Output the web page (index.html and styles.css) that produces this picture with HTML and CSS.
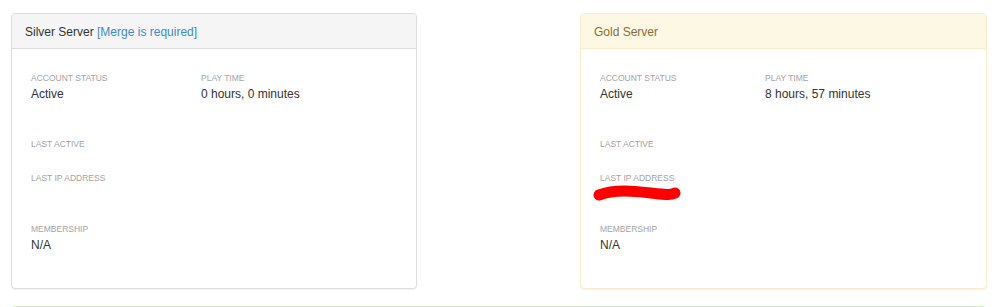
FILE: index.html
```html
<!DOCTYPE html>
<html>
<head>
<meta charset="utf-8">
<link rel="stylesheet" href="styles.css">
</head>
<body>
<div class="page">
  <div class="row">
    <div class="panel panel-silver">
      <div class="panel-heading">Silver Server <a class="merge" href="#">[Merge is required]</a></div>
      <div class="panel-body">
        <div class="pair">
          <div class="field">
            <div class="label">Account Status</div>
            <div class="value">Active</div>
          </div>
          <div class="field">
            <div class="label">Play Time</div>
            <div class="value">0 hours, 0 minutes</div>
          </div>
        </div>
        <div class="field">
          <div class="label">Last Active</div>
        </div>
        <div class="field">
          <div class="label">Last IP Address</div>
          <div class="value"></div>
        </div>
        <div class="field last">
          <div class="label">Membership</div>
          <div class="value">N/A</div>
        </div>
      </div>
    </div>
    <div class="panel panel-gold">
      <div class="panel-heading">Gold Server</div>
      <div class="panel-body">
        <div class="pair">
          <div class="field">
            <div class="label">Account Status</div>
            <div class="value">Active</div>
          </div>
          <div class="field">
            <div class="label">Play Time</div>
            <div class="value">8 hours, 57 minutes</div>
          </div>
        </div>
        <div class="field">
          <div class="label">Last Active</div>
        </div>
        <div class="field">
          <div class="label">Last IP Address</div>
          <div class="value">
            <svg class="redact" width="92" height="17" viewBox="0 0 92 17"><path d="M6 9 C 22 3, 40 5, 58 7 S 78 9, 82 7" fill="none" stroke="#ff0000" stroke-width="11" stroke-linecap="round"/></svg>
          </div>
        </div>
        <div class="field last">
          <div class="label">Membership</div>
          <div class="value">N/A</div>
        </div>
      </div>
    </div>
  </div>
  <div class="panel panel-success">
    <div class="panel-heading">&nbsp;</div>
  </div>
</div>
</body>
</html>
```
FILE: styles.css
```css
html, body {
  margin: 0;
  padding: 0;
  background: #fff;
}
body {
  font-family: "Liberation Sans", Arial, sans-serif;
  font-size: 12px;
  color: #333;
}
.page {
  width: 987px;
  height: 307px;
  box-sizing: border-box;
  overflow: hidden;
  padding: 13px 0 0 11px;
}
.row {
  display: flex;
  justify-content: space-between;
  margin-bottom: 17px;
}
.panel {
  border: 1px solid #ddd;
  border-radius: 4px;
  background: #fff;
  box-shadow: 0 1px 1px rgba(0, 0, 0, 0.05);
  box-sizing: border-box;
}
.panel-silver {
  width: 406px;
}
.panel-gold {
  width: 407px;
  border-color: #faebcc;
}
.panel-heading {
  padding: 11px 12px 8px 13px;
  line-height: 15px;
  font-size: 12px;
  border-bottom: 1px solid #ddd;
  border-radius: 3px 3px 0 0;
}
.panel-silver .panel-heading {
  background: #f5f5f5;
  color: #333;
}
.panel-gold .panel-heading {
  background: #fcf8e3;
  color: #8a6d3b;
  border-bottom-color: #faebcc;
}
.merge {
  color: #428bca;
  text-decoration: none;
}
.panel-body {
  padding: 23px 19px 35px 19px;
}
.pair {
  display: grid;
  grid-template-columns: 170px 1fr;
  margin-bottom: 36px;
}
.panel-gold .pair {
  grid-template-columns: 165px 1fr;
}
.field {
  margin-bottom: 21px;
}
.pair .field {
  margin-bottom: 0;
}
.field.last {
  margin-bottom: 0;
}
.label {
  font-size: 8.5px;
  line-height: 13px;
  text-transform: uppercase;
  color: #a4a4a4;
}
.value {
  font-size: 12px;
  line-height: 16px;
  height: 16px;
  padding-top: 1px;
  color: #333;
}
.redact {
  display: block;
  margin-left: -7px;
  overflow: visible;
}
.panel-success {
  border-color: #d6e9c6;
  height: 40px;
}
.panel-success .panel-heading {
  background: #dff0d8;
  border-bottom-color: #d6e9c6;
}
```
